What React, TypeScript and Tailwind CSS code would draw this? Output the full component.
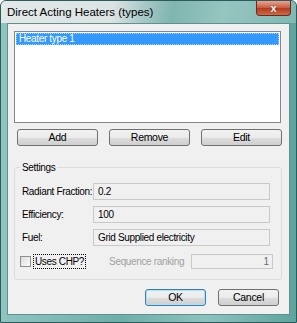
import React from "react";

const font = { fontFamily: '"Liberation Sans", Arial, sans-serif' };

function Btn({ label, w, focused }: { label: string; w: string; focused?: boolean }) {
  return (
    <div
      className={`${w} h-[17px] flex items-center justify-center rounded-[3px] border text-[10.5px] tracking-[-0.3px] text-black ${
        focused ? "border-[#3c7fb1] shadow-[inset_0_0_0_1px_#a8e1f8]" : "border-[#707070]"
      } bg-[linear-gradient(#f2f2f2_0%,#ebebeb_50%,#dddddd_51%,#cfcfcf_100%)]`}
    >
      {label}
    </div>
  );
}

function Field({ label, value }: { label: string; value: string }) {
  return (
    <div className="flex items-center h-[17px]">
      <span className="w-[75px] pl-[4px] whitespace-nowrap text-[10px] tracking-[-0.35px] text-black">{label}</span>
      <div className="w-[177px] h-[17px] border border-[#c9c9c9] bg-[#f0f0f0] whitespace-nowrap text-[10px] tracking-[-0.35px] text-black pl-[4px] flex items-center">
        {value}
      </div>
    </div>
  );
}

export default function App() {
  return (
    <div
      style={font}
      className="w-[297px] h-[323px] flex flex-col bg-[linear-gradient(90deg,#8fc4c0,#6eaea9_40%,#8cc2bd_70%,#5fa39e)] border border-[#2d5a5a] rounded-t-[6px] overflow-hidden"
    >
      <div className="h-[22px] relative flex items-center pl-[6px] bg-[linear-gradient(100deg,#e3e8e8_0%,#dbe3e3_38%,#a9cac7_48%,#7fb5b0_58%,#97c5c0_75%,#7fb8b2_100%)]">
        <span className="text-[11.5px] text-black pt-[2px] whitespace-nowrap">Direct Acting Heaters (types)</span>
        <div className="absolute right-[5px] top-0 w-[35px] h-[15px] rounded-b-[4px] border border-[#6b2a1f] border-t-0 bg-[linear-gradient(#e8a493,#c65a3f_50%,#b03a1e_51%,#d06a48)] flex items-center justify-center">
          <span className="text-white text-[11px] font-bold leading-none [text-shadow:0_0_1px_#3a0a00]">x</span>
        </div>
      </div>
      <div className="flex-1 flex px-[6px] pb-[7px]">
        <div className="flex-1 bg-[#f0f0f0] border border-[#5f8f8f] flex flex-col">
          <div className="mt-[7px] ml-[6px] w-[267px] h-[92px] border border-[#828790] bg-white p-[1px]">
            <div className="h-[12px] bg-[#3399ff] text-white whitespace-nowrap text-[10px] tracking-[-0.35px] leading-[10px] pl-[2px] border border-dotted border-[#9fcfff]">
              Heater type 1
            </div>
          </div>
          <div className="flex mt-[6px] ml-[9px] gap-[11px]">
            <Btn label="Add" w="w-[81px]" />
            <Btn label="Remove" w="w-[81px]" />
            <Btn label="Edit" w="w-[81px]" />
          </div>
          <div className="relative mt-[21px] ml-[6px] w-[268px] h-[113px] border border-[#dcdcdc] rounded-[3px]">
            <span className="absolute -top-[8px] left-[5px] px-[2px] bg-[#f0f0f0] whitespace-nowrap text-[10px] tracking-[-0.35px] text-black">Settings</span>
            <div className="flex flex-col gap-[6px] mt-[15px] ml-[3px]">
              <Field label="Radiant Fraction:" value="0.2" />
              <Field label="Efficiency:" value="100" />
              <Field label="Fuel:" value="Grid Supplied electricity" />
            </div>
            <div className="flex items-center mt-[8px] ml-[5px]">
              <div className="w-[11px] h-[11px] border border-[#8e8f8f] bg-[linear-gradient(135deg,#dcdcdc,#fbfbfb)]" />
              <span className="ml-[2px] px-[1px] border border-dotted border-black whitespace-nowrap text-[10px] tracking-[-0.35px] leading-[13px] text-black">Uses CHP?</span>
              <span className="ml-[23px] whitespace-nowrap text-[10px] tracking-[-0.35px] text-[#a0a0a0]">Sequence ranking</span>
              <div className="ml-[7px] w-[82px] h-[15px] border border-[#c9c9c9] bg-[#f0f0f0] text-[10px] text-[#6d6d6d] flex items-center justify-end pr-[3px]">
                1
              </div>
            </div>
          </div>
          <div className="flex justify-end gap-[12px] mt-[9px] mr-[10px]">
            <Btn label="OK" w="w-[61px]" focused />
            <Btn label="Cancel" w="w-[61px]" />
          </div>
        </div>
      </div>
    </div>
  );
}
